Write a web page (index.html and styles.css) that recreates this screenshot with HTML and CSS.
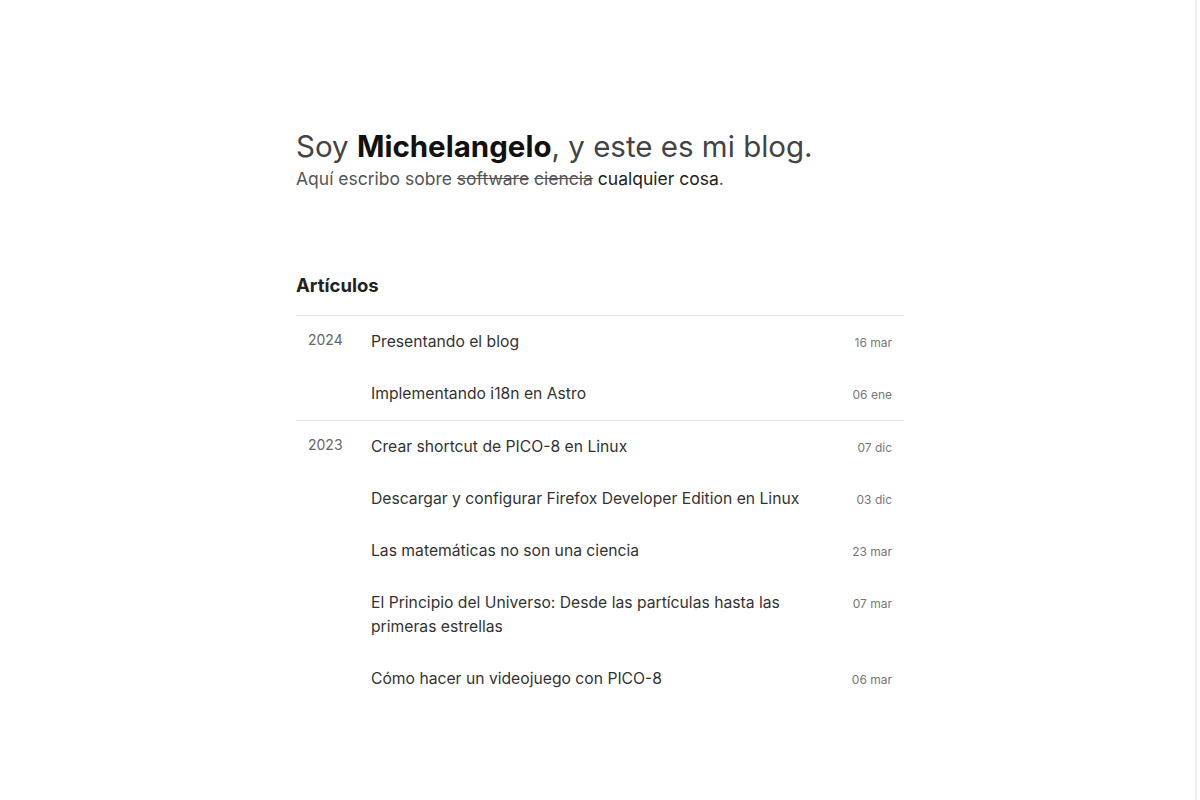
FILE: index.html
```html
<!DOCTYPE html>
<html lang="es">
<head>
<meta charset="utf-8">
<title>Blog</title>
<link rel="stylesheet" href="styles.css">
</head>
<body>
<main class="page">
  <header class="hero">
    <h1 class="hero-title">Soy <strong>Michelangelo</strong>, y este es mi blog.</h1>
    <p class="hero-sub">Aquí escribo sobre <s>software</s> <s>ciencia</s> <span class="dark">cualquier cosa</span>.</p>
  </header>
  <section class="articles">
    <h2 class="articles-title">Artículos</h2>
    <div class="year-group">
      <div class="year">2024</div>
      <ul class="posts">
        <li class="post"><a class="post-title">Presentando el blog</a><span class="post-date">16 mar</span></li>
        <li class="post"><a class="post-title">Implementando i18n en Astro</a><span class="post-date">06 ene</span></li>
      </ul>
    </div>
    <div class="year-group">
      <div class="year">2023</div>
      <ul class="posts">
        <li class="post"><a class="post-title">Crear shortcut de PICO-8 en Linux</a><span class="post-date">07 dic</span></li>
        <li class="post"><a class="post-title">Descargar y configurar Firefox Developer Edition en Linux</a><span class="post-date">03 dic</span></li>
        <li class="post"><a class="post-title">Las matemáticas no son una ciencia</a><span class="post-date">23 mar</span></li>
        <li class="post"><a class="post-title">El Principio del Universo: Desde las partículas hasta las primeras estrellas</a><span class="post-date">07 mar</span></li>
        <li class="post"><a class="post-title">Cómo hacer un videojuego con PICO-8</a><span class="post-date">06 mar</span></li>
      </ul>
    </div>
  </section>
</main>
</body>
</html>
```
FILE: styles.css
```css
* { box-sizing: border-box; }
html, body { margin: 0; padding: 0; }
body {
  font-family: Inter, "Noto Sans", sans-serif;
  color: #333;
  min-height: 800px;
  background: #fff linear-gradient(to left, transparent 3px, #efefef 3px, #efefef 5px, transparent 5px);
}
.page {
  width: 608px;
  margin: 0 auto;
  padding-top: 126px;
}
.hero-title {
  margin: 0;
  font-size: 29.5px;
  line-height: 40px;
  font-weight: 400;
  color: #444;
}
.hero-title strong { font-weight: 700; color: #111; }
.hero-sub {
  margin: 0;
  font-size: 17.5px;
  line-height: 26px;
  color: #555;
}
.hero-sub s { color: #555; }
.hero-sub .dark { color: #222; }
.articles { margin-top: 80px; }
.articles-title {
  margin: 0 0 17px;
  font-size: 18.5px;
  line-height: 26px;
  font-weight: 700;
  color: #222;
}
.year-group {
  display: flex;
  border-top: 1px solid #e5e5e5;
  padding: 0 12px;
}
.year {
  width: 63px;
  flex: none;
  font-size: 14px;
  line-height: 20px;
  color: #666;
  padding-top: 14px;
}
.posts {
  list-style: none;
  margin: 0;
  padding: 0;
  flex: 1;
}
.post {
  display: flex;
  align-items: baseline;
  justify-content: space-between;
  gap: 40px;
  padding: 14px 0;
}
.post-title {
  font-size: 15.7px;
  line-height: 24px;
  color: #333;
  max-width: 440px;
}
.post-date {
  font-size: 12px;
  color: #777;
  white-space: nowrap;
}
```
